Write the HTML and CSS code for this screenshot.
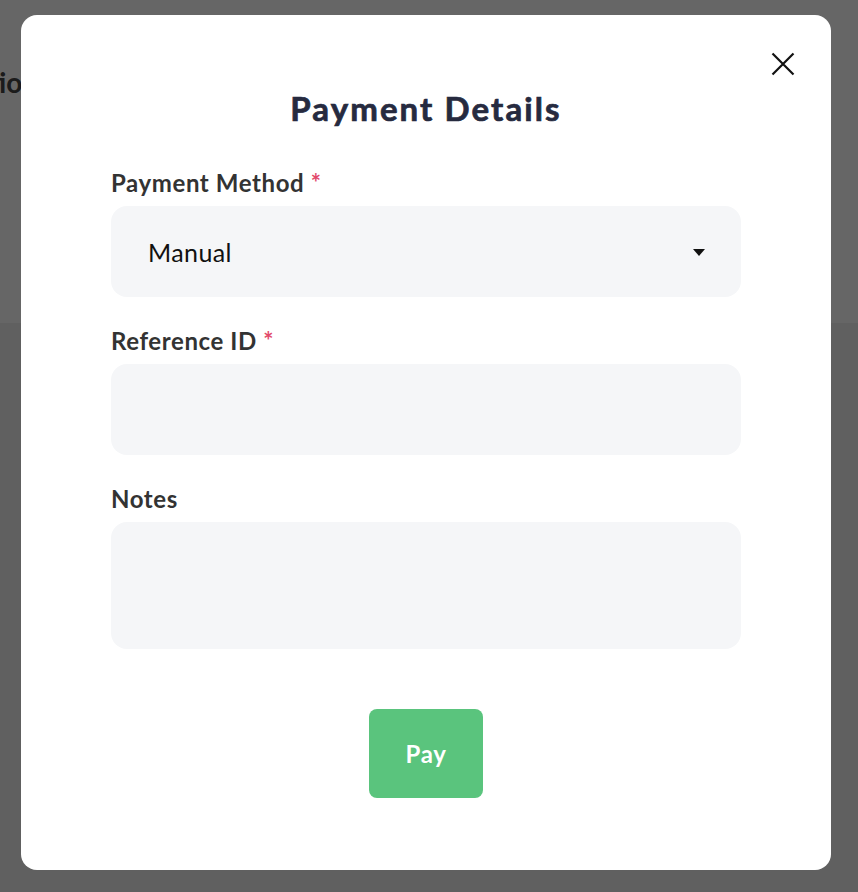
FILE: index.html
```html
<!DOCTYPE html>
<html lang="en">
<head>
    <meta charset="UTF-8">
    <meta name="viewport" content="width=device-width, initial-scale=1.0">
    <title>Payment Details</title>
    <link rel="stylesheet" href="styles.css">
</head>
<body>
    <!-- Page behind the modal -->
    <div class="page">
        <header class="page-header">
            <h1 class="page-title">Transaction History</h1>
        </header>
        <main class="page-body"></main>
    </div>

    <!-- Modal -->
    <div class="overlay">
        <div class="modal">
            <button class="close-btn" type="button" aria-label="Close">
                <svg width="24" height="24" viewBox="0 0 24 24" fill="none">
                    <path d="M1.5 1.5L22.5 22.5M22.5 1.5L1.5 22.5" stroke="#111" stroke-width="2.2"/>
                </svg>
            </button>

            <h2 class="modal-title">Payment Details</h2>

            <form class="payment-form">
                <div class="field">
                    <label for="method">Payment Method <span class="req">*</span></label>
                    <div class="select-wrap">
                        <select id="method" name="method">
                            <option>Manual</option>
                            <option>Card</option>
                            <option>Bank Transfer</option>
                        </select>
                    </div>
                </div>

                <div class="field">
                    <label for="reference">Reference ID <span class="req">*</span></label>
                    <input type="text" id="reference" name="reference">
                </div>

                <div class="field">
                    <label for="notes">Notes</label>
                    <textarea id="notes" name="notes"></textarea>
                </div>

                <div class="actions">
                    <button type="submit" class="pay-btn">Pay</button>
                </div>
            </form>
        </div>
    </div>
</body>
</html>
```

FILE: styles.css
```css
/* Colors */
:root {
    --title-color: #262a3f;
    --label-color: #333333;
    --field-bg: #f5f6f8;
    --required: #e2496b;
    --green: #5ac47d;
}

body {
    font-family: Lato, "Noto Sans", sans-serif;
    margin: 0;
    padding: 0;
    height: 100vh;
    overflow: hidden;
}

/* Page behind */
.page {
    height: 100%;
    display: flex;
    flex-direction: column;
}

.page-header {
    background: #ffffff;
    height: 323px;
    overflow: hidden;
}

.page-title {
    margin: 65px 0 0 -106px;
    font-size: 28px;
    font-weight: bold;
    color: #444;
    white-space: nowrap;
}

.page-body {
    flex: 1;
    background: #eff0ef;
}

/* Overlay */
.overlay {
    position: fixed;
    top: 0;
    left: 0;
    right: 0;
    bottom: 0;
    background: rgba(0, 0, 0, 0.6);
    display: flex;
    align-items: flex-start;
    padding: 15px 0 0 21px;
}

.modal {
    position: relative;
    width: 810px;
    box-sizing: border-box;
    background: #ffffff;
    border-radius: 16px;
    padding: 74px 90px 72px;
}

.close-btn {
    position: absolute;
    top: 37px;
    right: 36px;
    width: 24px;
    height: 24px;
    padding: 0;
    border: none;
    background: none;
    cursor: pointer;
}

.close-btn svg {
    display: block;
}

.modal-title {
    margin: 0 0 41px;
    text-align: center;
    font-size: 33px;
    line-height: 38px;
    font-weight: bold;
    letter-spacing: 2.1px;
    -webkit-text-stroke: 0.7px var(--title-color);
    color: var(--title-color);
}

/* Form */
.payment-form {
    display: flex;
    flex-direction: column;
    gap: 29px;
}

.field {
    display: flex;
    flex-direction: column;
}

label {
    font-size: 24px;
    line-height: 29px;
    font-weight: bold;
    letter-spacing: 0.6px;
    color: var(--label-color);
    margin-bottom: 9px;
}

.req {
    color: var(--required);
}

select,
input[type="text"],
textarea {
    font-family: inherit;
    font-size: 25px;
    letter-spacing: 0.4px;
    color: #111;
    background: var(--field-bg);
    border: none;
    border-radius: 16px;
    outline: none;
    box-sizing: border-box;
    width: 100%;
}

.select-wrap {
    position: relative;
}

.select-wrap::after {
    content: "";
    position: absolute;
    right: 36px;
    top: 43px;
    border-left: 6.5px solid transparent;
    border-right: 6.5px solid transparent;
    border-top: 7px solid #111;
    pointer-events: none;
}

select {
    appearance: none;
    -webkit-appearance: none;
    height: 91px;
    padding: 0 60px 0 37px;
}

input[type="text"] {
    height: 91px;
    padding: 0 37px;
}

textarea {
    height: 127px;
    padding: 20px 37px;
    resize: none;
    display: block;
}

/* Button */
.actions {
    display: flex;
    justify-content: center;
    margin-top: 31px;
}

.pay-btn {
    font-family: inherit;
    font-size: 24px;
    line-height: 29px;
    font-weight: bold;
    letter-spacing: 0.6px;
    color: #ffffff;
    background: var(--green);
    border: none;
    border-radius: 8px;
    padding: 30px 0;
    width: 114px;
    cursor: pointer;
}
```
